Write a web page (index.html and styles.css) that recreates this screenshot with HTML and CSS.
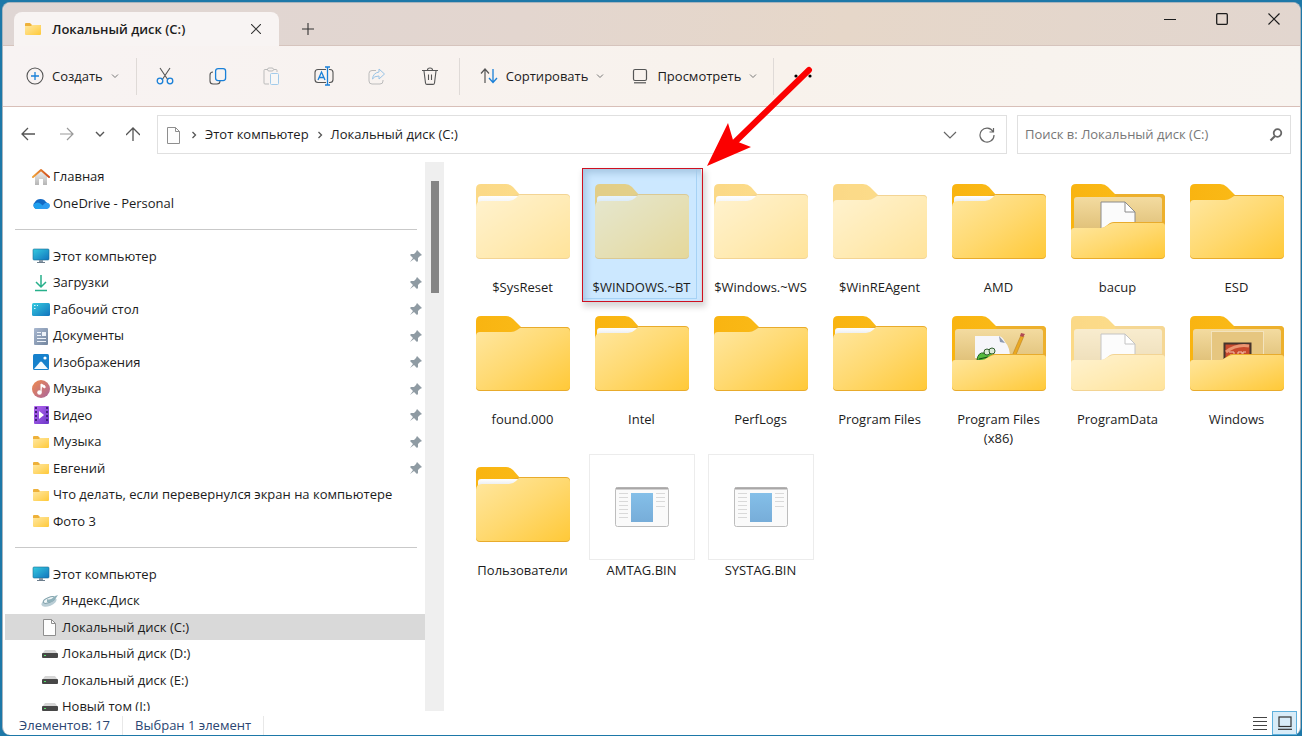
FILE: index.html
```html
<!DOCTYPE html>
<html lang="ru">
<head>
<meta charset="utf-8">
<title>Локальный диск (C:)</title>
<link rel="stylesheet" href="styles.css">
</head>
<body>
<svg class="defs" aria-hidden="true">
  <defs>
    <linearGradient id="g-front" x1="0" y1="0" x2="1" y2="1"><stop offset="0" stop-color="#ffe7a0"/><stop offset=".5" stop-color="#ffd970"/><stop offset="1" stop-color="#ffc938"/></linearGradient>
    <linearGradient id="g-tab" x1="0" y1="0" x2="1" y2="0"><stop offset="0" stop-color="#f9b411"/><stop offset="1" stop-color="#fbbf1c"/></linearGradient>
    <linearGradient id="g-paper" x1="0" y1="0" x2="0" y2="1"><stop offset="0" stop-color="#ffffff"/><stop offset="1" stop-color="#d9dde2"/></linearGradient>
    <linearGradient id="g-inner" x1="0" y1="0" x2="0" y2="1"><stop offset="0" stop-color="#f3dba0"/><stop offset="1" stop-color="#dcbb70"/></linearGradient>
    <linearGradient id="g-screen" x1="0" y1="0" x2="1" y2="1"><stop offset="0" stop-color="#35cbe0"/><stop offset="1" stop-color="#1173bd"/></linearGradient>
    <linearGradient id="g-blue" x1="0" y1="0" x2="0" y2="1"><stop offset="0" stop-color="#84bfe8"/><stop offset="1" stop-color="#77add9"/></linearGradient>
    <linearGradient id="g-music" x1="0" y1="0" x2="1" y2="1"><stop offset="0" stop-color="#f08a4c"/><stop offset="1" stop-color="#a9659f"/></linearGradient>
    <linearGradient id="g-video" x1="0" y1="0" x2="1" y2="1"><stop offset="0" stop-color="#b565f0"/><stop offset="1" stop-color="#6b38c8"/></linearGradient>
    <linearGradient id="g-house" x1="0" y1="0" x2="0" y2="1"><stop offset="0" stop-color="#efefef"/><stop offset="1" stop-color="#b5b5b5"/></linearGradient>
    <linearGradient id="g-roof" x1="0" y1="0" x2="1" y2="0"><stop offset="0" stop-color="#f0a33a"/><stop offset="1" stop-color="#cf4a1c"/></linearGradient>
    <linearGradient id="g-doc" x1="0" y1="0" x2="1" y2="1"><stop offset="0" stop-color="#a9b8d0"/><stop offset="1" stop-color="#73869f"/></linearGradient>
  </defs>

  <symbol id="folder-plain" viewBox="0 0 106 106">
    <path d="M6 40V18q0-5 5-5h25q4 0 7 3l8 8h45q4 0 4 4v54H6z" fill="url(#g-tab)"/>
    <path d="M10 29h31q3 0 6-2l3-3h46q4 0 4 4v56q0 4-4 4H10q-4 0-4-4V33q0-4 4-4z" fill="#e8ab2c"/>
    <path d="M10 29h31q3 0 6-2l3-2h46q4 0 4 4v54q0 4-4 4H10q-4 0-4-4V33q0-4 4-4z" fill="url(#g-front)"/>
  </symbol>
  <symbol id="folder-full" viewBox="0 0 106 106">
    <path d="M6 40V18q0-5 5-5h25q4 0 7 3l7 8h46q4 0 4 4v8H6z" fill="url(#g-tab)"/>
    <path d="M50 23h46q4 0 4 4v57q0 4-4 4H10q-4 0-4-4V33z" fill="#e8ab2c"/>
    <path d="M11 25h38l-6 6H13q-4 0-5 5v-8q0-3 3-3z" fill="url(#g-paper)"/>
    <path d="M12 30h27q4 0 7-3l3-3h47q4 0 4 4v55q0 4-4 4H10q-4 0-4-4V36q0-6 6-6z" fill="url(#g-front)"/>
  </symbol>
  <symbol id="folder-back" viewBox="0 0 106 106">
    <path d="M6 80V18q0-5 5-5h25q4 0 7 3l7 7h46q4 0 4 4v53z" fill="url(#g-tab)"/>
    <path d="M50 23h46q4 0 4 4v50H60z" fill="#edb02c"/>
    <rect x="9" y="26" width="88" height="40" rx="3" fill="url(#g-inner)"/>
  </symbol>
  <symbol id="folder-flap" viewBox="0 0 106 106">
    <path d="M9 57h27q3 0 5-2l4-3q2-1 4-1h47q4 0 4-3v36q0 4-4 4H10q-4 0-4-4V60q0-3 3-3z" fill="#e8ab2c"/>
    <path d="M9 57h27q3 0 5-2l4-2q2-1 4-1h48q3 0 3 3v28q0 4-4 4H10q-4 0-4-4V60q0-3 3-3z" fill="url(#g-front)"/>
  </symbol>
  <symbol id="folder-doc" viewBox="0 0 106 106">
    <use href="#folder-back"/>
    <path d="M36 31h24l10 10v20H36z" fill="#fbfbfb" stroke="#8b8b8b"/>
    <path d="M60 31v10h10z" fill="#fff" stroke="#8b8b8b"/>
    <use href="#folder-flap"/>
  </symbol>
  <symbol id="folder-art" viewBox="0 0 106 106">
    <use href="#folder-back"/>
    <path d="M29 33h24q4 1 6 6 5 5 5 16H29z" fill="#f6f6fa"/>
    <path d="M53 33l1 6 5 1z" fill="#8c98b0"/>
    <path d="M66 53l9-21 3 1-9 21z" fill="#e9a823" stroke="#b47b1d" stroke-width=".5"/>
    <path d="M75 30l4 1-2 3-3-1z" fill="#b04a55"/>
    <path d="M31 57q1-8 7-7 3-5 7-3 4 2 2 7l-6 4z" fill="#54ba3d" stroke="#25631f"/>
    <circle cx="41" cy="49" r="3" fill="#dcecd8" stroke="#355f33"/>
    <circle cx="46" cy="48" r="3" fill="#dcecd8" stroke="#355f33"/>
    <path d="M33 56l9-2" stroke="#164814"/>
    <use href="#folder-flap"/>
  </symbol>
  <symbol id="folder-win" viewBox="0 0 106 106">
    <use href="#folder-back"/>
    <rect x="27.500" y="28.500" width="52" height="40" fill="#e6c680" stroke="#f3e3bd"/>
    <rect x="40.500" y="40.500" width="26" height="24" fill="#c8492d" stroke="#46352d" stroke-width="2"/>
    <path d="M42 49q10-8 23-6" stroke="#eb9571" stroke-width="3" fill="none"/>
    <path d="M45 49h5v3h-4v3m8-6v6m0-6h4v6m4-6h-3v3h4" stroke="#f4c4b0" fill="none"/>
    <use href="#folder-flap"/>
  </symbol>
  <symbol id="file-bin" viewBox="0 0 106 106">
    <rect x=".5" y=".5" width="105" height="105" fill="#fff" stroke="#ececec"/>
    <rect x="26.500" y="33.500" width="53" height="39" rx="2" fill="#fafafa" stroke="#bdbdbd"/>
    <path d="M27 34.500h52" stroke="#a9a7a7" stroke-width="2"/>
    <path d="M30 39.500h9M30 43.500h9M30 47.500h9M30 51.500h9M30 55.500h9M30 59.500h9M30 63.500h9M67 39.500h9M67 43.500h9M67 47.500h9M67 52.500h9" stroke="#d9d9d9"/>
    <rect x="42" y="39" width="22" height="29" fill="url(#g-blue)"/>
  </symbol>

  <symbol id="i-folder" viewBox="0 0 18 18">
    <path d="M1 14V4q0-1 1-1h4l2 2h8q1 0 1 1v8z" fill="#eeb13a"/>
    <path d="M1 6h6l1-1h8q1 0 1 1v8q0 1-1 1H2q-1 0-1-1z" fill="url(#g-front)"/>
  </symbol>
  <symbol id="i-home" viewBox="0 0 18 18">
    <path d="M3 8l6-5 6 5v9h-4v-6H7v6H3z" fill="url(#g-house)"/>
    <path d="M1 9l8-7 8 7" fill="none" stroke="url(#g-roof)" stroke-width="2" stroke-linecap="round" stroke-linejoin="round"/>
  </symbol>
  <symbol id="i-cloud" viewBox="0 0 18 18">
    <path d="M4 15a4 4 0 0 1-1-7 6 5 0 0 1 11 0 4 4 0 0 1 1 7z" fill="#1269c4"/>
    <path d="M4 15a4 4 0 0 1-2-5q4-3 7 0l5 5z" fill="#1fa0ee"/>
    <path d="M7 15l6-6q4-1 5 2 0 4-4 4z" fill="#2f9cf0"/>
  </symbol>
  <symbol id="i-pc" viewBox="0 0 18 18">
    <rect x="1" y="2" width="16" height="11" rx="1" fill="url(#g-screen)" stroke="#1a6d93" stroke-width=".6"/>
    <path d="M7 13h4v2H7z" fill="#8697a5"/><path d="M5 15.500h8" stroke="#6d7e8d"/>
  </symbol>
  <symbol id="i-down" viewBox="0 0 18 18">
    <path d="M9 1v12M4 8l5 5 5-5M3 16.500h12" fill="none" stroke="#27b08b" stroke-width="1.500"/>
  </symbol>
  <symbol id="i-desk" viewBox="0 0 18 18">
    <rect y="3" width="18" height="13" rx="1.500" fill="url(#g-screen)"/>
    <path d="M2 5.500h1.500M2 8.500h1.500M5 5.500h1" stroke="#d5f6fb"/>
  </symbol>
  <symbol id="i-docs" viewBox="0 0 18 18">
    <rect x="2" y="1" width="14" height="17" rx="1" fill="url(#g-doc)"/>
    <path d="M5 5.500h4M5 8.500h4M5 11.500h9M5 14.500h9" stroke="#eef3fa"/><rect x="10" y="5" width="4" height="4" fill="#eef3fa"/>
  </symbol>
  <symbol id="i-img" viewBox="0 0 18 18">
    <rect x="1" y="1" width="16" height="16" rx="1.500" fill="#1681cc"/>
    <path d="M2 16l6-7q1-1 2 0l6 7z" fill="#f2faff"/><circle cx="13" cy="5" r="1.600" fill="#fff"/>
  </symbol>
  <symbol id="i-music" viewBox="0 0 18 18">
    <circle cx="9" cy="9" r="9" fill="url(#g-music)"/>
    <path d="M9 12V4l4 2v2L10 6.500" fill="#fff" stroke="#fff"/><circle cx="7.500" cy="12.500" r="2.300" fill="#fff"/>
  </symbol>
  <symbol id="i-video" viewBox="0 0 18 18">
    <rect x="2" y="0" width="15" height="18" rx="1" fill="url(#g-video)"/>
    <path d="M4 1v16M15 1v16" stroke="#41217c" stroke-width="2" stroke-dasharray="2 2"/><path d="M7 5l5 4-5 4z" fill="#fff"/>
  </symbol>
  <symbol id="i-yadisk" viewBox="0 0 18 18">
    <ellipse cx="8" cy="10" rx="8" ry="4" transform="rotate(-22 8 10)" fill="#b9cdd5"/>
    <ellipse cx="8" cy="8" rx="6" ry="2.500" transform="rotate(-22 8 8)" fill="#eef5f7" stroke="#83a3ad"/>
    <path d="M6 7q3 2 8-3l3-1-2 3q-4 5-9 4z" fill="#8fb1ba"/>
  </symbol>
  <symbol id="i-page" viewBox="0 0 18 18">
    <path d="M2.500 1.500h8l4 4v12h-12z" fill="#fdfdfd" stroke="#8e8e8e"/><path d="M10.500 1.500v4h4" fill="none" stroke="#8e8e8e"/>
  </symbol>
  <symbol id="i-drive" viewBox="0 0 18 18">
    <path d="M4 5h10l3 4H1z" fill="#d6d6d6"/><rect x="1" y="8" width="16" height="5" rx="1" fill="#474747"/><rect x="3" y="10" width="2" height="1" fill="#54e36a"/>
  </symbol>
  <symbol id="i-pin" viewBox="0 0 14 14">
    <path d="M8 1l5 5-2 1-2 2v3l-1 1-3-3-4 3 3-4-3-3 1-1h3l2-2z" fill="#8f9ba3"/>
  </symbol>
  <symbol id="i-chev" viewBox="0 0 8 8"><path d="M1 2.500l3 3 3-3" fill="none" stroke="#777"/></symbol>
  <symbol id="i-right" viewBox="0 0 8 8"><path d="M2.500 1l3 3-3 3" fill="none" stroke="#555" stroke-width="1.300"/></symbol>
</svg>

<div class="window">
  <header class="titlebar">
    <div class="tab">
      <svg class="i18"><use href="#i-folder"/></svg>
      <span class="tab-title">Локальный диск (C:)</span>
      <button class="tab-close" aria-label="Закрыть вкладку"><svg class="i10" viewBox="0 0 10 10"><path d="M0 0l10 10M10 0L0 10" stroke="#333" stroke-width="1.100"/></svg></button>
    </div>
    <button class="tab-new" aria-label="Новая вкладка"><svg class="i12" viewBox="0 0 12 12"><path d="M6 0v12M0 6h12" stroke="#333" stroke-width="1.100"/></svg></button>
    <div class="win-controls">
      <button aria-label="Свернуть"><svg class="i12" viewBox="0 0 12 12"><path d="M0 6.500h12" stroke="#1c1c1c"/></svg></button>
      <button aria-label="Развернуть"><svg class="i12" viewBox="0 0 12 12"><rect x=".7" y=".7" width="10.600" height="10.600" rx="1" fill="none" stroke="#1c1c1c" stroke-width="1.300"/></svg></button>
      <button aria-label="Закрыть"><svg class="i12" viewBox="0 0 12 12"><path d="M.5.5l11 11M11.500.5l-11 11" stroke="#1c1c1c" stroke-width="1.200"/></svg></button>
    </div>
  </header>

  <div class="toolbar">
    <button class="tool text create"><svg class="i18" viewBox="0 0 18 18" fill="none"><circle cx="9" cy="9" r="8" stroke="#555" stroke-width="1.100"/><path d="M9 5v8M5 9h8" stroke="#1a80d8" stroke-width="1.300"/></svg>Создать<svg class="i8"><use href="#i-chev"/></svg></button>
    <span class="divider"></span>
    <button class="tool" aria-label="Вырезать"><svg class="i18" viewBox="0 0 18 18" fill="none"><path d="M4 1l8 12M14 1L6 13" stroke="#555" stroke-width="1.100"/><circle cx="4" cy="14" r="2.800" stroke="#1a80d8" stroke-width="1.300"/><circle cx="14" cy="14" r="2.800" stroke="#1a80d8" stroke-width="1.300"/></svg></button>
    <button class="tool" aria-label="Копировать"><svg class="i18" viewBox="0 0 18 18" fill="none"><path d="M4 5q-3 0-3 3v6q0 3 3 3h4q3 0 3-3" stroke="#555" stroke-width="1.100"/><rect x="6.600" y="1.600" width="10" height="12" rx="2.500" stroke="#1a80d8" stroke-width="1.300"/></svg></button>
    <button class="tool" aria-label="Вставить"><svg class="i18" viewBox="0 0 18 18" fill="none"><path d="M6 2.500H3q-1 0-1 1V16q0 1 1 1h4M12 2.500h2q1 0 1 1V5" stroke="#bbb"/><rect x="5.500" y="1" width="6" height="3" rx="1.500" stroke="#bbb"/><rect x="8.500" y="6.500" width="8" height="11" rx="1" stroke="#a3cbea" fill="#f8f7f6"/></svg></button>
    <button class="tool" aria-label="Переименовать"><svg class="i20" viewBox="0 0 20 20" fill="none"><path d="M12 3.500H4q-3 0-3 3v7q0 3 3 3h8M15 3.500h1q3 0 3 3v7q0 3-3 3h-1" stroke="#555" stroke-width="1.100"/><path d="M4 14l3.500-8L11 14M5.300 11.500h4.400M13.500 1.500v17M11 1h5M11 19h5" stroke="#1a80d8" stroke-width="1.300"/></svg></button>
    <button class="tool" aria-label="Поделиться"><svg class="i18" viewBox="0 0 18 18" fill="none"><path d="M8 3.500H4q-3 0-3 3V14q0 3 3 3h8q3 0 3-3v-1" stroke="#bbb"/><path d="M11 2l5.500 5-5.500 5V9q-5 0-6.500 3Q5 6 11 5z" stroke="#9ac4e6" stroke-linejoin="round"/></svg></button>
    <button class="tool" aria-label="Удалить"><svg class="i18" viewBox="0 0 18 18" fill="none" stroke="#555" stroke-width="1.100"><path d="M1 3.500h16M6.500 3q0-2 2.500-2t2.500 2M3 4l1.500 12q.2 1.400 1.500 1.400h6q1.300 0 1.500-1.400L15 4M7.500 7.500V13M10.500 7.500V13"/></svg></button>
    <span class="divider"></span>
    <button class="tool text sort"><svg class="i18" viewBox="0 0 18 18" fill="none"><path d="M5 16V2M1 6.500l4-4.500 4 4.500" stroke="#555" stroke-width="1.200"/><path d="M13 2v13.500M9 11l4 4.500 4-4.500" stroke="#1a80d8" stroke-width="1.300"/></svg>Сортировать<svg class="i8"><use href="#i-chev"/></svg></button>
    <button class="tool text view"><svg class="i18" viewBox="0 0 18 18" fill="none" stroke="#555" stroke-width="1.200"><rect x="2.500" y="2.500" width="13" height="11" rx="1.500"/><path d="M3 15.800h12"/></svg>Просмотреть<svg class="i8"><use href="#i-chev"/></svg></button>
    <span class="divider"></span>
    <button class="tool more" aria-label="Дополнительно"><svg class="i18" viewBox="0 0 18 18"><circle cx="2" cy="9" r="1.600"/><circle cx="9" cy="9" r="1.600"/><circle cx="16" cy="9" r="1.600"/></svg></button>
  </div>

  <div class="addressrow">
    <div class="history">
      <button aria-label="Назад"><svg class="i14" viewBox="0 0 14 14"><path d="M14 7H1M7 1L1 7l6 6" fill="none" stroke="#555" stroke-width="1.300"/></svg></button>
      <button aria-label="Вперёд"><svg class="i14" viewBox="0 0 14 14"><path d="M0 7h13M7 1l6 6-6 6" fill="none" stroke="#999" stroke-width="1.200"/></svg></button>
      <button aria-label="Последние"><svg class="i10" viewBox="0 0 10 10"><path d="M1 3l4 4 4-4" fill="none" stroke="#555" stroke-width="1.400"/></svg></button>
      <button aria-label="Вверх"><svg class="i14" viewBox="0 0 14 14"><path d="M7 14V1M0 8l7-7 7 7" fill="none" stroke="#555" stroke-width="1.300"/></svg></button>
    </div>
    <div class="address">
      <svg class="i18"><use href="#i-page"/></svg>
      <svg class="i8"><use href="#i-right"/></svg>
      <a href="#pc">Этот компьютер</a>
      <svg class="i8"><use href="#i-right"/></svg>
      <a href="#c">Локальный диск (C:)</a>
      <button class="addr-drop" aria-label="Предыдущие расположения"><svg class="i14" viewBox="0 0 14 14"><path d="M1 4l6 6 6-6" fill="none" stroke="#666" stroke-width="1.200"/></svg></button>
      <button aria-label="Обновить"><svg class="i16" viewBox="0 0 16 16"><path d="M14 4.500A7 7 0 1 0 15 8M14.500 1v4h-4" fill="none" stroke="#666" stroke-width="1.200"/></svg></button>
    </div>
    <div class="search">
      <input type="text" aria-label="Поиск" placeholder="Поиск в: Локальный диск (C:)">
      <button aria-label="Найти"><svg class="i14" viewBox="0 0 14 14" fill="none" stroke="#666"><circle cx="8.500" cy="5" r="3.800" stroke-width="1.800"/><path d="M6 8l-4.500 4.500" stroke-width="2.200"/></svg></button>
    </div>
  </div>

  <div class="main">
    <nav class="sidebar">
      <ul>
        <li><a href="#home"><svg class="i18"><use href="#i-home"/></svg>Главная</a></li>
        <li><a href="#od"><svg class="i18"><use href="#i-cloud"/></svg>OneDrive - Personal</a></li>
        <li class="rule"></li>
        <li><a href="#pc"><svg class="i18"><use href="#i-pc"/></svg>Этот компьютер<svg class="pin"><use href="#i-pin"/></svg></a></li>
        <li><a href="#dl"><svg class="i18"><use href="#i-down"/></svg>Загрузки<svg class="pin"><use href="#i-pin"/></svg></a></li>
        <li><a href="#desk"><svg class="i18"><use href="#i-desk"/></svg>Рабочий стол<svg class="pin"><use href="#i-pin"/></svg></a></li>
        <li><a href="#docs"><svg class="i18"><use href="#i-docs"/></svg>Документы<svg class="pin"><use href="#i-pin"/></svg></a></li>
        <li><a href="#img"><svg class="i18"><use href="#i-img"/></svg>Изображения<svg class="pin"><use href="#i-pin"/></svg></a></li>
        <li><a href="#mus"><svg class="i18"><use href="#i-music"/></svg>Музыка<svg class="pin"><use href="#i-pin"/></svg></a></li>
        <li><a href="#vid"><svg class="i18"><use href="#i-video"/></svg>Видео<svg class="pin"><use href="#i-pin"/></svg></a></li>
        <li><a href="#mus2"><svg class="i18"><use href="#i-folder"/></svg>Музыка<svg class="pin"><use href="#i-pin"/></svg></a></li>
        <li><a href="#ev"><svg class="i18"><use href="#i-folder"/></svg>Евгений<svg class="pin"><use href="#i-pin"/></svg></a></li>
        <li><a href="#what"><svg class="i18"><use href="#i-folder"/></svg>Что делать, если перевернулся экран на компьютере</a></li>
        <li><a href="#photo"><svg class="i18"><use href="#i-folder"/></svg>Фото 3</a></li>
        <li class="rule"></li>
        <li><a href="#pc2"><svg class="i18"><use href="#i-pc"/></svg>Этот компьютер</a></li>
        <li class="sub"><a href="#ya"><svg class="i18"><use href="#i-yadisk"/></svg>Яндекс.Диск</a></li>
        <li class="sub current"><a href="#c"><svg class="i18"><use href="#i-page"/></svg>Локальный диск (C:)</a></li>
        <li class="sub"><a href="#d"><svg class="i18"><use href="#i-drive"/></svg>Локальный диск (D:)</a></li>
        <li class="sub"><a href="#e"><svg class="i18"><use href="#i-drive"/></svg>Локальный диск (E:)</a></li>
        <li class="sub"><a href="#i"><svg class="i18"><use href="#i-drive"/></svg>Новый том (I:)</a></li>
      </ul>
    </nav>
    <div class="scroll"><div class="thumb"></div></div>
    <ul class="files">
      <li class="hidden-item"><button><svg class="pic"><use href="#folder-full"/></svg><span>$SysReset</span></button></li>
      <li class="hidden-item selected"><button><svg class="pic"><use href="#folder-full"/></svg><span>$WINDOWS.~BT</span></button>
        <svg class="arrow" viewBox="0 0 110 106"><path d="M102 8L28 80" stroke="#fb0000" stroke-width="6" stroke-linecap="round"/><path d="M0 104L21 61l5 17 18 7z" fill="#fb0000"/></svg></li>
      <li class="hidden-item"><button><svg class="pic"><use href="#folder-full"/></svg><span>$Windows.~WS</span></button></li>
      <li class="hidden-item"><button><svg class="pic"><use href="#folder-plain"/></svg><span>$WinREAgent</span></button></li>
      <li><button><svg class="pic"><use href="#folder-full"/></svg><span>AMD</span></button></li>
      <li><button><svg class="pic"><use href="#folder-doc"/></svg><span>bacup</span></button></li>
      <li><button><svg class="pic"><use href="#folder-plain"/></svg><span>ESD</span></button></li>
      <li><button><svg class="pic"><use href="#folder-plain"/></svg><span>found.000</span></button></li>
      <li><button><svg class="pic"><use href="#folder-full"/></svg><span>Intel</span></button></li>
      <li><button><svg class="pic"><use href="#folder-plain"/></svg><span>PerfLogs</span></button></li>
      <li><button><svg class="pic"><use href="#folder-full"/></svg><span>Program Files</span></button></li>
      <li><button><svg class="pic"><use href="#folder-art"/></svg><span>Program Files (x86)</span></button></li>
      <li class="hidden-item"><button><svg class="pic"><use href="#folder-doc"/></svg><span>ProgramData</span></button></li>
      <li><button><svg class="pic"><use href="#folder-win"/></svg><span>Windows</span></button></li>
      <li><button><svg class="pic"><use href="#folder-full"/></svg><span>Пользователи</span></button></li>
      <li><button><svg class="pic"><use href="#file-bin"/></svg><span>AMTAG.BIN</span></button></li>
      <li><button><svg class="pic"><use href="#file-bin"/></svg><span>SYSTAG.BIN</span></button></li>
    </ul>
  </div>

  <footer class="status">
    <span>Элементов: 17</span>
    <span>Выбран 1 элемент</span>
    <div class="modes">
      <button aria-label="Таблица"><svg class="i14" viewBox="0 0 14 14"><path d="M0 1.500h14M0 5.500h14M0 9.500h14M0 13.500h14" stroke="#444"/></svg></button>
      <button class="on" aria-label="Крупные значки"><svg class="i14" viewBox="0 0 14 14" fill="none" stroke="#333" stroke-width="1.200"><rect x="1" y="1" width="12" height="9.500"/><path d="M0 13.300h14"/></svg></button>
    </div>
  </footer>
</div>
</body>
</html>
```
FILE: styles.css
```css
* { box-sizing: border-box; }
body {
  margin: 0;
  height: 100vh;
  padding: 2px 1px 1px 2px;
  overflow: hidden;
  background: #1d78a8;
  color: #1c1c1c;
  font: 13px/19px "Open Sans", "Noto Sans", sans-serif;
}
ul { list-style: none; margin: 0; padding: 0; }
a { color: inherit; text-decoration: none; }
button {
  display: flex;
  align-items: center;
  justify-content: center;
  margin: 0;
  padding: 0;
  border: 0;
  background: none;
  color: inherit;
  font: inherit;
}
svg { flex: none; display: block; }
.defs { position: absolute; width: 0; height: 0; }
.i8 { width: 8px; height: 8px; }
.i10 { width: 10px; height: 10px; }
.i12 { width: 12px; height: 12px; }
.i14 { width: 14px; height: 14px; }
.i16 { width: 16px; height: 16px; }
.i18 { width: 18px; height: 18px; }
.i20 { width: 20px; height: 20px; }

.window {
  display: flex;
  flex-direction: column;
  height: 100%;
  border: 1px solid #a9b4bd;
  border-bottom: 0;
  border-radius: 8px;
  background: #fff;
}

.titlebar {
  display: flex;
  height: 43px;
  padding-left: 11px;
  border-bottom: 1px solid #d6c4bd;
  border-radius: 7px 7px 0 0;
  background: linear-gradient(100deg, #dfd6d4, #e3d6cf 40%, #e6d7c9 65%, #e2d6cf);
}
.tab {
  display: flex;
  align-items: center;
  width: 265px;
  height: 34px;
  margin: 9px 0 -1px;
  padding: 0 8px 0 10px;
  border-radius: 8px 8px 0 0;
  background: #f8f4f3;
}
.tab-title { flex: 1; margin-left: 10px; font-weight: 600; }
.tab-close { width: 30px; height: 28px; }
.tab-new { width: 58px; height: 34px; margin-top: 9px; }
.win-controls { display: flex; margin-left: auto; }
.win-controls button { width: 52px; height: 32px; }

.toolbar {
  display: flex;
  align-items: center;
  height: 61px;
  border-bottom: 1px solid #d8bfb8;
  background: linear-gradient(100deg, #f8f3f3, #f8f2ec 60%, #f8f4f0);
}
.tool { width: 53px; height: 40px; }
.tool.text { width: auto; gap: 8px; }
.tool.create { padding: 0 15px 0 23px; }
.tool.sort { padding: 0 11px 0 18px; }
.tool.view { padding: 0 14px 0 16px; }
.divider { width: 1px; height: 37px; margin: 0 2px; background: #dfdad7; }

.addressrow {
  display: flex;
  padding: 8px 9px 0 5px;
}
.history { display: flex; margin-right: 5px; }
.history button { width: 39px; height: 38px; }
.history button:nth-child(3) { width: 27px; }
.address, .search {
  display: flex;
  align-items: center;
  height: 39px;
  border: 1px solid #e0e0e0;
}
.address { flex: 1; gap: 7px; padding-left: 7px; }
.address button { width: 30px; height: 36px; }
.address button:last-child { margin-right: 4px; }
.address .addr-drop { margin-left: auto; }
.search { width: 274px; margin-left: 10px; padding: 0 4px 0 7px; }
.search input {
  flex: 1;
  min-width: 0;
  padding: 0;
  border: 0;
  outline: 0;
  background: none;
  color: #777;
  font: inherit;
}
.search input::placeholder { color: #777; opacity: 1; }
.search button { width: 20px; height: 30px; }

.main {
  display: flex;
  flex: 1;
  min-height: 0;
  margin-top: 8px;
}
.sidebar { width: 422px; padding: 1px 0 0 2px; overflow: hidden; }
.sidebar li { height: 27px; padding-left: 27px; }
.sidebar li:nth-child(even) { height: 26px; }
.sidebar .sub { padding-left: 36px; }
.sidebar a { display: flex; align-items: center; gap: 3px; height: 100%; }
.sidebar .current { background: #d9d9d9; }
.sidebar .rule { display: flex; align-items: center; padding: 0 8px 0 10px; }
.sidebar .rule::before { content: ""; flex: 1; height: 1px; background: #c9c9c9; }
.pin { width: 14px; height: 14px; margin: 0 2px 0 auto; }
.scroll { width: 19px; padding: 19px 5px 0 6px; background: #efefef; }
.thumb { height: 112px; background: #858585; }

.files {
  display: grid;
  flex: 1;
  grid-template-columns: repeat(auto-fill, 119px);
  align-content: start;
  padding: 7px 0 0 19px;
}
.files li { position: relative; }
.files button {
  flex-direction: column;
  justify-content: flex-start;
  gap: 1px;
  width: 100%;
  padding: 2px 4px 4px;
}
.pic { width: 106px; height: 106px; }
.hidden-item .pic { opacity: 0.5; }
.selected {
  background: #cce8ff;
  box-shadow: inset 4px 4px 7px #a5c6e2, inset -4px -2px 0 #cce8ff, inset -5px -3px 0 #a6d2f5, 3px 4px 6px 2px rgba(0, 0, 0, 0.16);
}
.selected::after {
  content: "";
  position: absolute;
  inset: -1px -2px -1px 0;
  border: 1px solid #cf1020;
  pointer-events: none;
}
.arrow {
  position: absolute;
  z-index: 1;
  left: 125px;
  top: -107px;
  width: 110px;
  height: 106px;
}

.status {
  display: flex;
  align-items: center;
  height: 24px;
  padding-left: 16px;
  color: #2b4672;
}
.status span { margin-top: 4px; padding-right: 12px; margin-right: 12px; border-right: 1px solid #e8e8e8; }
.modes { display: flex; align-self: stretch; margin-left: auto; padding-right: 3px; }
.modes button { width: 25px; height: 24px; border: 1px solid transparent; }
.modes .on { border-color: #5fb0dc; background: #d8ecf8; }
```
